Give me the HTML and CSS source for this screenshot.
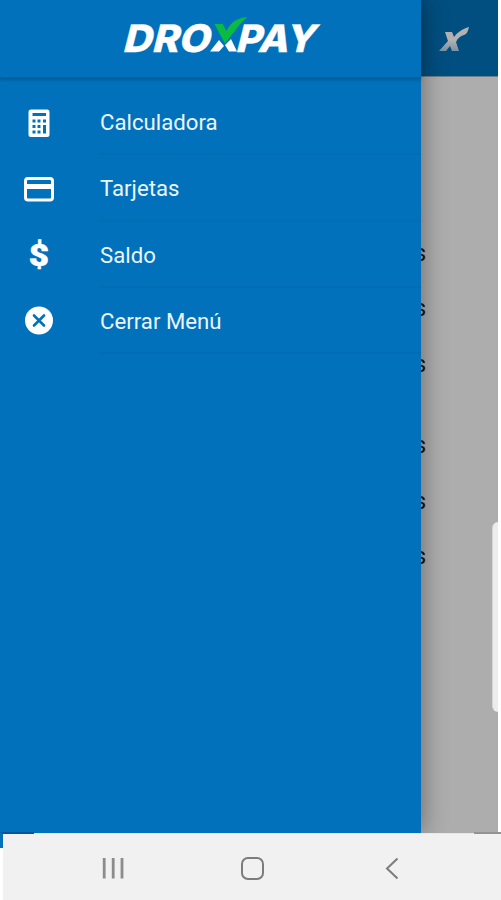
FILE: index.html
```
<!DOCTYPE html>
<html lang="es">
<head>
<meta charset="utf-8">
<title>Droxpay</title>
<link rel="stylesheet" href="styles.css">
</head>
<body>
<div class="screen">
  <main class="page">
    <header class="page-bar">
      <svg class="page-mark" width="32" height="28" viewBox="0 0 32 28"><defs><linearGradient id="m" x1="0" y1="0" x2="0" y2="1"><stop offset="0" stop-color="#b5b0ab"/><stop offset=".55" stop-color="#b2b2b2"/><stop offset="1" stop-color="#7d91a1"/></linearGradient></defs><path fill="url(#m)" d="M6 6h7l2 5C19 6 23 3 30 1c-1 4-2 7-5 8-4 1-6 3-8 7l3 9h-7l-2-5-4 5H0l9-10z"/></svg>
    </header>
    <ul class="page-list"><li>s</li><li>s</li><li>s</li></ul>
    <ul class="page-list page-list-next"><li>s</li><li>s</li><li>s</li></ul>
  </main>
  <aside class="drawer">
    <header class="drawer-head">
      <svg class="logo" width="198" height="38" viewBox="0 0 198 38">
        <g class="logo-text">
          <text transform="translate(0 36.500) skewX(-14)" textLength="87" lengthAdjust="spacingAndGlyphs">DRO</text>
          <text transform="translate(113 36.500) skewX(-14)" textLength="79" lengthAdjust="spacingAndGlyphs">PAY</text>
        </g>
        <path fill="#fff" d="M97 25l5 6-5 5.500h-9zM103 30l6-6 6 12.500h-8z"/>
        <path class="logo-check" d="M92.500 9h8l4 7C108 9 113 3 125.500 2c-6 5-10 10-13.500 15l-9 11.500z"/>
      </svg>
    </header>
    <nav class="menu">
      <a class="item"><svg class="icon" viewBox="0 0 32 32"><path fill="#fff" fill-rule="evenodd" d="M8 2.500h16q2.500 0 2.500 2.500v22.500q0 2.500-2.500 2.500H8q-2.500 0-2.500-2.500V5q0-2.500 2.500-2.500zM9.500 6v3h13.500V6zM9.500 12.500v3h3v-3zM14.500 12.500v3h3v-3zM20 12.500v3h3v-3zM9.500 18v3h3v-3zM14.500 18v3h3v-3zM20 18v8.500h3v-8.500zM9.500 23.500v3h3v-3zM14.500 23.500v3h3v-3z"/></svg><span class="label">Calculadora</span></a>
      <a class="item"><svg class="icon" viewBox="0 0 32 32"><rect x="2.500" y="5.500" width="27" height="21.500" rx="2.500" fill="none" stroke="#fff" stroke-width="3"/><path fill="#fff" d="M2 11h28v5H2z"/></svg><span class="label">Tarjetas</span></a>
      <a class="item"><span class="icon dollar">$</span><span class="label">Saldo</span></a>
      <a class="item"><svg class="icon" viewBox="0 0 32 32"><circle cx="16" cy="15.500" r="14" fill="#fff"/><path d="M11 10.500l10 10M21 10.500l-10 10" stroke="#0271bb" stroke-width="2.600" stroke-linecap="round"/></svg><span class="label">Cerrar Menú</span></a>
    </nav>
  </aside>
  <div class="edge-panel"></div>
</div>
<footer class="system-bar">
  <svg width="24" height="24" viewBox="0 0 24 24"><path d="M3.200 1v20.500M12.200 1v20.500M21 1v20.500" stroke="#8c8c8c" stroke-width="2.800"/></svg>
  <svg width="24" height="24" viewBox="0 0 24 24"><rect x="2" y="1" width="21" height="21" rx="6" fill="none" stroke="#7c7c7c" stroke-width="2"/></svg>
  <svg width="24" height="24" viewBox="0 0 24 24"><path d="M18.500 1.500L8 11.500l10.500 10" fill="none" stroke="#7c7c7c" stroke-width="2"/></svg>
</footer>
</body>
</html>
```
FILE: styles.css
```
* { box-sizing: border-box; }
body {
  margin: 0;
  height: 900px;
  overflow: hidden;
  display: flex;
  flex-direction: column;
  background: #fff;
  font-family: Roboto, "Liberation Sans", sans-serif;
}
.screen {
  position: relative;
  width: 498px;
  height: 833px;
  flex: none;
  background: #adadad;
}
.page { height: 833px; overflow: hidden; }
.page-bar {
  height: 77px;
  padding: 26px 27px 0 0;
  background: #004f80;
  border-bottom: 1px solid #6e7f89;
  text-align: right;
}
.page-list {
  list-style: none;
  margin: 0;
  padding: 149px 0 0;
  width: 426px;
  text-align: right;
  font-size: 23px;
  color: #151515;
}
.page-list-next { padding-top: 26px; }
.page-list li { height: 55.400px; line-height: 55px; }
.drawer {
  position: absolute;
  left: 0;
  top: 0;
  width: 421px;
  height: 833px;
  background: #0271bb;
  box-shadow: 0 0 24px rgba(0, 0, 0, .42);
  clip-path: inset(0 -40px 0 0);
}
.drawer-head {
  height: 79px;
  padding: 15px 0 0 122px;
  border-bottom: 2px solid #02629f;
  box-shadow: 0 1px 3px rgba(0, 40, 80, .3);
}
.logo { display: block; overflow: visible; }
.logo-text {
  fill: #fff;
  font-family: Inter, "Open Sans", sans-serif;
  font-size: 38px;
  font-weight: 800;
  stroke: #fff;
  stroke-width: .4px;
}
.logo-check { fill: #0abb42; }
.menu { padding-top: 10px; }
.item {
  display: flex;
  align-items: stretch;
  height: 66.300px;
  padding-left: 23px;
  color: #eaf6ff;
}
.icon {
  width: 32px;
  height: 32px;
  flex: none;
  margin: 17.500px 45px 0 0;
}
.dollar {
  color: #fff;
  font-size: 33px;
  font-weight: 900;
  line-height: 34px;
  text-align: center;
  -webkit-text-stroke: .5px #fff;
  transform: scale(1.06, .94);
}
.label {
  flex: 1;
  border-bottom: 2px solid #026cb4;
  font-size: 22.200px;
  line-height: 67px;
}
.edge-panel {
  position: absolute;
  right: 0;
  top: 522px;
  width: 6px;
  height: 190px;
  background: #ececec;
  border-left: 1px solid #d5d5d5;
  border-radius: 6px 0 0 6px;
}
.system-bar {
  position: relative;
  flex: 1;
  margin-left: 3px;
  padding: 23px 98px 0;
  display: flex;
  justify-content: space-between;
  background: #f1f1f1;
  border-top: 1px solid #e4e8eb;
}
.system-bar::before {
  content: "";
  position: absolute;
  left: -3px;
  top: -2px;
  width: 31px;
  height: 14px;
  border-top: 2px solid #00559b;
  border-left: 3px solid #0271bb;
}
.system-bar::after {
  content: "";
  position: absolute;
  right: 0;
  top: -2px;
  width: 27px;
  height: 2px;
  background: #939393;
}
```
